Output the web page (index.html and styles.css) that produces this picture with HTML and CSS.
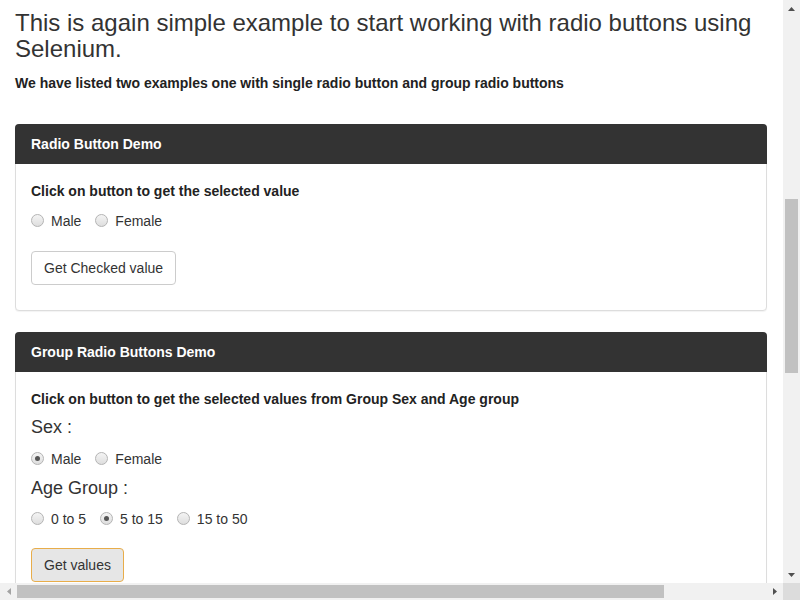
FILE: index.html
```html
<!DOCTYPE html>
<html lang="en">
<head>
<meta charset="utf-8">
<title>Radio Button Demo</title>
<link rel="stylesheet" href="styles.css">
</head>
<body>
<div class="window">
  <div class="viewport">
    <div class="container">
      <h3 class="title">This is again simple example to start working with radio buttons using Selenium.</h3>
      <p class="intro">We have listed two examples one with single radio button and group radio buttons</p>

      <div class="panel">
        <div class="panel-heading">Radio Button Demo</div>
        <div class="panel-body">
          <p class="hint">Click on button to get the selected value</p>
          <div class="radio-row">
            <label class="radio"><span class="radio-dot"></span><span>Male</span></label>
            <label class="radio"><span class="radio-dot"></span><span>Female</span></label>
          </div>
          <div class="actions">
            <button class="btn" type="button">Get Checked value</button>
          </div>
        </div>
      </div>

      <div class="panel">
        <div class="panel-heading">Group Radio Buttons Demo</div>
        <div class="panel-body">
          <p class="hint">Click on button to get the selected values from Group Sex and Age group</p>
          <h4 class="group-label">Sex :</h4>
          <div class="radio-row">
            <label class="radio"><span class="radio-dot checked"></span><span>Male</span></label>
            <label class="radio"><span class="radio-dot"></span><span>Female</span></label>
          </div>
          <h4 class="group-label age">Age Group :</h4>
          <div class="radio-row">
            <label class="radio"><span class="radio-dot"></span><span>0 to 5</span></label>
            <label class="radio"><span class="radio-dot checked"></span><span>5 to 15</span></label>
            <label class="radio"><span class="radio-dot"></span><span>15 to 50</span></label>
          </div>
          <div class="actions actions-group">
            <button class="btn btn-focus" type="button">Get values</button>
          </div>
        </div>
      </div>
    </div>
  </div>

  <div class="vscroll">
    <div class="sb-btn"><svg width="7" height="4" viewBox="0 0 7 4"><polygon points="0,4 7,4 3.5,0" fill="#505050"/></svg></div>
    <div class="vtrack"><div class="vthumb"></div></div>
    <div class="sb-btn"><svg width="7" height="4" viewBox="0 0 7 4"><polygon points="0,0 7,0 3.5,4" fill="#505050"/></svg></div>
  </div>

  <div class="hscroll">
    <div class="sb-btn"><svg width="4" height="7" viewBox="0 0 4 7"><polygon points="4,0 4,7 0,3.5" fill="#a3a3a3"/></svg></div>
    <div class="htrack"><div class="hthumb"></div></div>
    <div class="sb-btn"><svg width="4" height="7" viewBox="0 0 4 7"><polygon points="0,0 0,7 4,3.5" fill="#505050"/></svg></div>
  </div>

  <div class="corner"></div>
</div>
</body>
</html>
```

FILE: styles.css
```css
html, body {
  margin: 0;
  padding: 0;
  background: #fff;
  overflow: hidden;
}

body {
  font-family: "Liberation Sans", Arial, Helvetica, sans-serif;
  font-size: 14px;
  line-height: 20px;
  color: #333;
}

/* browser window frame with scrollbars */
.window {
  display: grid;
  grid-template-columns: 783px 17px;
  grid-template-rows: 583px 17px;
  width: 800px;
  height: 600px;
  overflow: hidden;
}

.viewport {
  overflow: hidden;
}

.vscroll {
  display: flex;
  flex-direction: column;
  background: #f1f1f1;
}

.hscroll {
  display: flex;
  background: #f1f1f1;
}

.sb-btn {
  flex: none;
  width: 17px;
  height: 17px;
  display: flex;
  align-items: center;
  justify-content: center;
}

.vtrack {
  flex: 1;
  padding: 0 2px;
}

.vthumb {
  margin-top: 182px;
  height: 174px;
  background: #c1c1c1;
}

.htrack {
  flex: 1;
  padding: 2px 0;
}

.hthumb {
  width: 647px;
  height: 13px;
  background: #c1c1c1;
}

.corner {
  background: #dcdcdc;
}

/* page content */
.container {
  width: 752px;
  padding: 0 16px 0 15px;
}

.title {
  margin: 10px 0 0;
  font-size: 24px;
  line-height: 26.4px;
  font-weight: normal;
  color: #333;
}

.intro {
  margin: 10px 0 31px;
  font-weight: bold;
  color: #222;
}

.panel {
  border: 1px solid #ddd;
  border-radius: 4px;
  margin-bottom: 21px;
  background: #fff;
  box-shadow: 0 1px 1px rgba(0, 0, 0, 0.05);
}

.panel-heading {
  margin: -1px -1px 0;
  padding: 10px 16px;
  background: #333;
  color: #fff;
  font-weight: bold;
  border-radius: 4px 4px 0 0;
}

.panel-body {
  padding: 17px 15px 15px;
}

.hint {
  margin: 0 0 10px;
  font-weight: bold;
  color: #222;
}

.radio-row {
  display: flex;
  align-items: center;
  gap: 14px;
  height: 20px;
}

.radio {
  display: flex;
  align-items: center;
  gap: 7px;
}

.radio-dot {
  box-sizing: border-box;
  width: 13px;
  height: 13px;
  border-radius: 50%;
  border: 1px solid #b4b4b4;
  background: linear-gradient(#f4f4f4, #dedede);
  display: flex;
  align-items: center;
  justify-content: center;
}

.radio-dot.checked::after {
  content: "";
  width: 5px;
  height: 5px;
  border-radius: 50%;
  background: #555;
}

.actions {
  margin-top: 20px;
  margin-bottom: 10px;
}

.actions-group {
  margin-top: 19px;
}

.btn {
  box-sizing: border-box;
  height: 34px;
  padding: 6px 12px;
  font-family: inherit;
  font-size: 14px;
  line-height: 20px;
  color: #333;
  background: #fff;
  border: 1px solid #ccc;
  border-radius: 4px;
}

.btn-focus {
  background: #e6e6e6;
  border-color: #e8ad4a;
}

.group-label {
  margin: -3px 0 11px;
  font-size: 18px;
  line-height: 22px;
  font-weight: normal;
  color: #333;
}

.group-label.age {
  margin-top: 8px;
  margin-bottom: 10px;
}
```
